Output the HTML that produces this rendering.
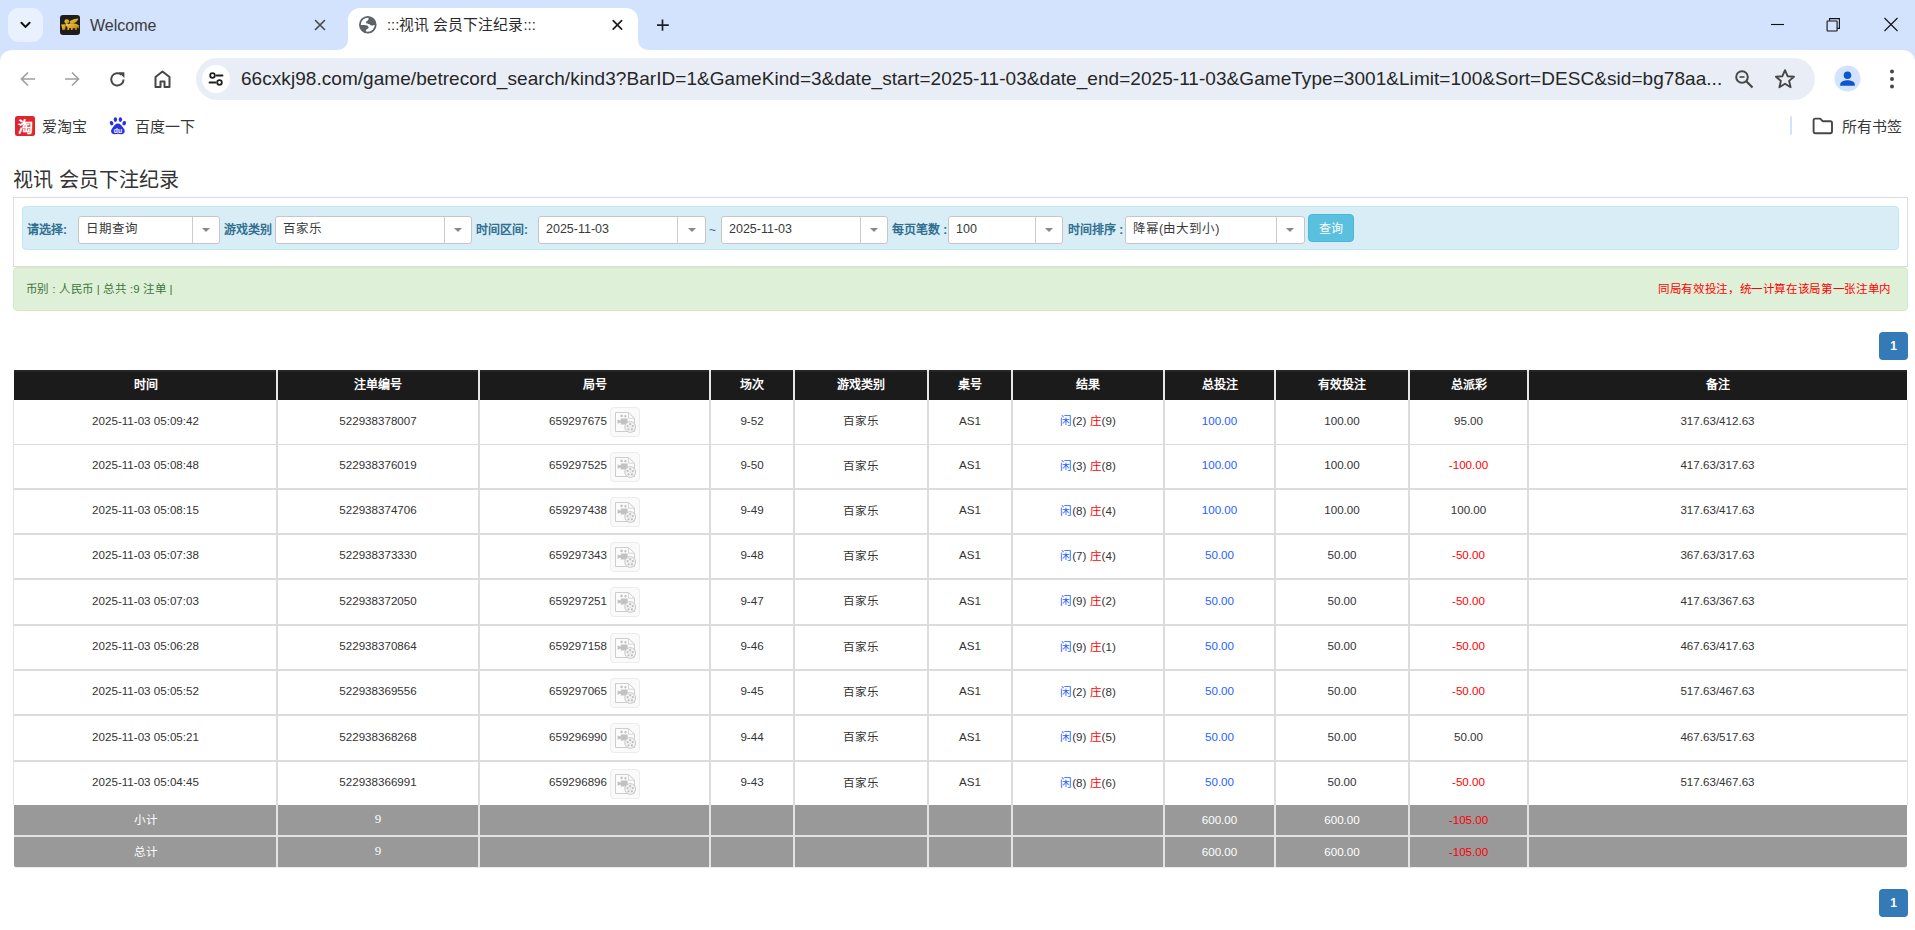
<!DOCTYPE html>
<html lang="zh-CN">
<head>
<meta charset="utf-8">
<title>视讯 会员下注纪录</title>
<style>
*{margin:0;padding:0;box-sizing:border-box}
html,body{width:1915px;height:930px;overflow:hidden;background:#fff;font-family:"Liberation Sans",sans-serif;color:#333}
.a{position:absolute}
/* chrome */
#tabstrip{left:0;top:0;width:1915px;height:62px;background:#d3e3fd}
#tabdd{left:8px;top:8px;width:35px;height:34px;border-radius:11px;background:#eaf1fe}
#acttab{left:348px;top:8px;width:290px;height:42px;background:#fff;border-radius:12px 12px 0 0}
.flare{width:10px;height:10px;top:40px;background:#fff}
.flare i{position:absolute;left:0;top:0;width:10px;height:10px;background:#d3e3fd}
#toolbar{left:0;top:50px;width:1915px;height:98px;background:#fff;border-radius:12px 12px 0 0}
#omni{left:196px;top:58px;width:1619px;height:42px;border-radius:21px;background:#e9eef6}
.tabtitle{font-size:15px;color:#1f1f1f;white-space:nowrap;line-height:20px}
.bm{font-size:15px;color:#383838;white-space:nowrap;line-height:18px}
svg{display:block}
/* page */
#title{left:13px;top:165px;font-size:20px;line-height:26px;color:#333;white-space:nowrap}
#panel{left:13px;top:197px;width:1895px;height:70px;border:1px solid #ddd;background:#fff}
#well{left:22px;top:206px;width:1877px;height:44px;border:1px solid #bce8f1;background:#d9edf7;border-radius:4px}
.lbl{font-size:12px;font-weight:bold;color:#31708f;white-space:nowrap;line-height:16px;top:222px}
.sel{top:216px;height:28px;background:#fff;border:1px solid #c6c6c6;border-radius:3px}
.sel .t{position:absolute;left:7px;top:4px;font-size:12.5px;line-height:16px;color:#3a3a3a;white-space:nowrap}
.sel .d{position:absolute;top:0;bottom:0;width:1px;background:#ccc}
.sel .c{position:absolute;top:10.5px;width:0;height:0;border-left:4px solid transparent;border-right:4px solid transparent;border-top:4px solid #888}
#qbtn{left:1308px;top:214px;width:46px;height:28px;background:#5bc0de;border:1px solid #46b8da;border-radius:4px;color:#fff;font-size:12px;line-height:28px;text-align:center}
#alert{left:13px;top:267px;width:1895px;height:44px;background:#dff0d8;border:1px solid #d6e9c6;border-radius:4px}
.th,.td,.tg{display:flex;align-items:center;justify-content:center;white-space:nowrap;font-size:11.6px}
.th>span,.td>span,.tg>span{position:relative;top:-2px}
.th{color:#fff;font-weight:bold;font-size:12px}
.td{color:#333}
.tg{color:#fff}
.tg>span{top:-1px}
.bl{color:#1f63ff}
.rd{color:#f00}
.jw{display:inline-flex;align-items:center}
.vb{position:relative;top:2px;display:inline-block;width:30px;height:30px;margin-left:3px;border:1px solid #ececec;border-radius:4px;background:#fafafa;padding:3px}
.pg{width:29px;height:28px;background:#337ab7;border-radius:4px;color:#fff;font-size:12px;font-weight:bold;text-align:center;line-height:28px}
</style>
</head>
<body>
<!-- ===== browser chrome ===== -->
<div class="a" id="tabstrip"></div>
<div class="a" id="tabdd"></div>
<svg class="a" style="left:19px;top:21px" width="13" height="8" viewBox="0 0 13 8"><path d="M2.4 1.8 L6.5 5.9 L10.6 1.8" fill="none" stroke="#111" stroke-width="2" stroke-linecap="round" stroke-linejoin="miter"/></svg>

<!-- inactive tab -->
<svg class="a" style="left:60px;top:15px" width="20" height="20" viewBox="0 0 20 20"><defs><linearGradient id="gd" x1="0" y1="0" x2="1" y2="1"><stop offset="0" stop-color="#f4c94a"/><stop offset=".6" stop-color="#d9a21e"/><stop offset="1" stop-color="#a8740e"/></linearGradient></defs><rect x="0" y="0" width="20" height="20" rx="3" fill="#1d1d1d"/><path d="M9.5 6.2 C12 4.4 15.5 3.6 18.6 3.4 C17.8 5.6 16.2 7.4 12.6 8.6 L10.4 8.8Z" fill="url(#gd)"/><circle cx="6.8" cy="6.6" r="2.4" fill="url(#gd)"/><path d="M1.2 9.4 L5.8 9.2 L5.2 14.8 L2.6 15 Z" fill="url(#gd)"/><ellipse cx="12.6" cy="10.9" rx="5.6" ry="2.6" fill="url(#gd)"/><path d="M7.4 11.5H9.2V15H7.4Z M11 12H12.6V15H11Z M15.2 11.8H16.8V15H15.2Z M17.6 9.6 L19 10.6 L18.6 13.6 L17.4 13Z M5.8 8.4 L8.6 9 L8.2 11.6 L5.6 11.2Z" fill="url(#gd)"/></svg>
<div class="a tabtitle" style="left:90px;top:16px;font-size:16px;color:#3a3a3a">Welcome</div>
<svg class="a" style="left:314px;top:19px" width="12" height="12" viewBox="0 0 12 12"><path d="M1.5 1.5L10.5 10.5M10.5 1.5L1.5 10.5" stroke="#474747" stroke-width="1.6" stroke-linecap="round"/></svg>

<!-- active tab -->
<div class="a" id="acttab"></div>
<div class="a flare" style="left:338px"><i style="border-radius:0 0 10px 0"></i></div>
<div class="a flare" style="left:638px"><i style="border-radius:0 0 0 10px"></i></div>
<svg class="a" style="left:359px;top:16px" width="18" height="18" viewBox="0 0 18 18"><circle cx="8.8" cy="8.8" r="7.9" fill="none" stroke="#5f6368" stroke-width="1.8"/><path d="M9.6 0.9 C9.7 3 9.4 4.2 8.5 4.7 C7.5 5.1 6.9 5.8 7.1 6.8 C7.4 7.7 8.4 7.9 9.5 7.9 C10.5 7.9 11.1 8.6 11.5 9.2 C12.5 9.9 14.4 9.7 16.7 8.8 A7.9 7.9 0 0 0 9.6 0.9Z M0.9 9 C3 8.8 5.4 8.9 7.2 9.3 C8.7 9.7 9.6 10.5 9.6 11.5 C9.6 12.6 8.2 12.8 7.4 13.4 C6.8 14 6.6 15.4 6.9 16.6 A7.9 7.9 0 0 1 0.9 9Z" fill="#5f6368"/></svg>
<div class="a tabtitle" style="left:387px;top:15px;font-size:14.8px;color:#2a2a2a">:::视讯 会员下注纪录:::</div>
<svg class="a" style="left:611px;top:19px" width="12" height="12" viewBox="0 0 12 12"><path d="M2.2 1.6L10.6 10.2M10.6 1.6L2.2 10.2" stroke="#1f1f1f" stroke-width="1.7" stroke-linecap="round"/></svg>
<svg class="a" style="left:655px;top:18px" width="15" height="15" viewBox="0 0 15 15"><path d="M7.5 1.4V12.8M2 7.1H13.8" stroke="#1f1f1f" stroke-width="1.7"/></svg>

<!-- window controls -->
<svg class="a" style="left:1770px;top:17px" width="16" height="14" viewBox="0 0 16 14"><path d="M1 7.5H14" stroke="#111" stroke-width="1.1"/></svg>
<svg class="a" style="left:1825px;top:16px" width="16" height="16" viewBox="0 0 16 16"><rect x="2.1" y="5" width="10" height="10" rx="0.6" fill="none" stroke="#111" stroke-width="1.1"/><path d="M4.6 4.8 V2.6 H14.4 V12.4 H12.2" fill="none" stroke="#111" stroke-width="1.1"/></svg>
<svg class="a" style="left:1883px;top:16px" width="16" height="16" viewBox="0 0 16 16"><path d="M1.5 2L14.5 15M14.5 2L1.5 15" stroke="#111" stroke-width="1.1"/></svg>

<!-- toolbar -->
<div class="a" id="toolbar"></div>
<svg class="a" style="left:19px;top:70px" width="18" height="18" viewBox="0 0 18 18"><path d="M16 9H3M9 2.5L2.5 9L9 15.5" fill="none" stroke="#a0a0a0" stroke-width="1.7" stroke-linejoin="miter"/></svg>
<svg class="a" style="left:63px;top:70px" width="18" height="18" viewBox="0 0 18 18"><path d="M2 9H15M9 2.5L15.5 9L9 15.5" fill="none" stroke="#a0a0a0" stroke-width="1.7"/></svg>
<svg class="a" style="left:108px;top:70px" width="19" height="19" viewBox="0 0 19 19"><path d="M15.6 9.5 A6.2 6.2 0 1 1 13.6 4.8" fill="none" stroke="#474747" stroke-width="2"/><path d="M10.6 2.2 H16.4 V8 Z" fill="#474747"/></svg>
<svg class="a" style="left:153px;top:69px" width="19" height="20" viewBox="0 0 19 20"><path d="M2.5 18V8L9.5 2.5L16.5 8V18H11.5V12.5H7.5V18Z" fill="none" stroke="#474747" stroke-width="2" stroke-linejoin="round"/></svg>
<div class="a" id="omni"></div>
<svg class="a" style="left:202px;top:65px" width="28" height="28" viewBox="0 0 28 28"><circle cx="14" cy="14" r="14" fill="#fff"/><circle cx="10.5" cy="10.5" r="2.3" fill="none" stroke="#1f1f1f" stroke-width="1.8"/><path d="M14.5 10.5H20.5" stroke="#1f1f1f" stroke-width="1.8" stroke-linecap="round"/><circle cx="17.5" cy="17.5" r="2.3" fill="none" stroke="#1f1f1f" stroke-width="1.8"/><path d="M7.5 17.5H13.5" stroke="#1f1f1f" stroke-width="1.8" stroke-linecap="round"/></svg>
<div class="a" id="url" style="left:241px;top:68px;font-size:19px;line-height:22px;color:#262626;letter-spacing:0.05px;white-space:nowrap">66cxkj98.com/game/betrecord_search/kind3?BarID=1&amp;GameKind=3&amp;date_start=2025-11-03&amp;date_end=2025-11-03&amp;GameType=3001&amp;Limit=100&amp;Sort=DESC&amp;sid=bg78aa...</div>
<svg class="a" style="left:1734px;top:69px" width="21" height="21" viewBox="0 0 21 21"><circle cx="8" cy="8" r="5.8" fill="none" stroke="#474747" stroke-width="2"/><path d="M12.3 12.3L18.5 18.5" stroke="#474747" stroke-width="2.2"/><path d="M5.5 8H10.5" stroke="#474747" stroke-width="1.6"/></svg>
<svg class="a" style="left:1774px;top:68px" width="22" height="22" viewBox="0 0 22 22"><path d="M11 2.2L13.6 8.2L20 8.7L15.1 12.9L16.6 19.2L11 15.8L5.4 19.2L6.9 12.9L2 8.7L8.4 8.2Z" fill="none" stroke="#474747" stroke-width="1.9" stroke-linejoin="round"/></svg>
<svg class="a" style="left:1834px;top:65px" width="27" height="27" viewBox="0 0 27 27"><circle cx="13.5" cy="13.5" r="13" fill="#d3e3fd"/><circle cx="13.5" cy="10.2" r="3.8" fill="#0b57d0"/><path d="M6.2 19.6 C6.2 16.2 10.5 15.2 13.5 15.2 C16.5 15.2 20.8 16.2 20.8 19.6 V20.8 H6.2Z" fill="#0b57d0"/></svg>
<svg class="a" style="left:1888px;top:68px" width="8" height="22" viewBox="0 0 8 22"><circle cx="4" cy="3.5" r="2" fill="#474747"/><circle cx="4" cy="11" r="2" fill="#474747"/><circle cx="4" cy="18.5" r="2" fill="#474747"/></svg>

<!-- bookmarks bar -->
<svg class="a" style="left:15px;top:116px" width="20" height="20" viewBox="0 0 20 20"><rect width="20" height="20" rx="2.5" fill="#e0262d"/><text x="10" y="16" font-size="15" font-weight="bold" fill="#fff" text-anchor="middle" font-family="Liberation Sans">淘</text></svg>
<div class="a bm" style="left:42px;top:118px">爱淘宝</div>
<svg class="a" style="left:109px;top:117px" width="18" height="18" viewBox="0 0 18 18"><ellipse cx="2.6" cy="6.2" rx="1.8" ry="2.3" transform="rotate(-20 2.6 6.2)" fill="#2932e1"/><ellipse cx="6.4" cy="2.6" rx="1.7" ry="2.3" fill="#2932e1"/><ellipse cx="11.4" cy="2.6" rx="1.7" ry="2.3" fill="#2932e1"/><ellipse cx="15.2" cy="6.2" rx="1.8" ry="2.3" transform="rotate(20 15.2 6.2)" fill="#2932e1"/><path d="M8.9 6.6 C11.2 6.6 12.6 8.6 14 10.4 C15.4 12 16 13.4 15.6 15 C15.1 16.8 13.4 17.4 11.8 17.2 C10.6 17.1 9.8 16.8 8.9 16.8 C8 16.8 7.2 17.1 6 17.2 C4.4 17.4 2.7 16.8 2.2 15 C1.8 13.4 2.4 12 3.8 10.4 C5.2 8.6 6.6 6.6 8.9 6.6Z" fill="#2932e1"/><text x="8.9" y="15.6" font-size="6.8" font-weight="bold" fill="#fff" text-anchor="middle" font-family="Liberation Sans">du</text></svg>
<div class="a bm" style="left:135px;top:118px">百度一下</div>
<div class="a" style="left:1790px;top:116px;width:2px;height:19px;background:#d3e3fd;border-radius:1px"></div>
<svg class="a" style="left:1811px;top:117px" width="23" height="18" viewBox="0 0 23 18"><path d="M2.6 3.2 C2.6 2.2 3.2 1.6 4.2 1.6 H9.2 L11.6 4.2 H19.4 C20.4 4.2 21 4.8 21 5.8 V14.6 C21 15.6 20.4 16.2 19.4 16.2 H4.2 C3.2 16.2 2.6 15.6 2.6 14.6 Z" fill="none" stroke="#474747" stroke-width="1.9" stroke-linejoin="round"/></svg>
<div class="a bm" style="left:1842px;top:118px">所有书签</div>

<!-- ===== page ===== -->
<div class="a" id="title" style="top:167px">视讯 会员下注纪录</div>
<div class="a" id="panel"></div>
<div class="a" id="well"></div>

<div class="a lbl" style="left:27px">请选择:</div>
<div class="a sel" style="left:78px;width:142px"><span class="t">日期查询</span><i class="d" style="left:113px"></i><i class="c" style="left:123px"></i></div>
<div class="a lbl" style="left:224px">游戏类别</div>
<div class="a sel" style="left:275px;width:197px"><span class="t">百家乐</span><i class="d" style="left:168px"></i><i class="c" style="left:178px"></i></div>
<div class="a lbl" style="left:476px">时间区间:</div>
<div class="a sel" style="left:538px;width:168px"><span class="t">2025-11-03</span><i class="d" style="left:138px"></i><i class="c" style="left:149px"></i></div>
<div class="a" style="left:709px;top:222px;font-size:12px;line-height:16px;color:#31708f">~</div>
<div class="a sel" style="left:721px;width:167px"><span class="t">2025-11-03</span><i class="d" style="left:138px"></i><i class="c" style="left:148px"></i></div>
<div class="a lbl" style="left:892px">每页笔数 :</div>
<div class="a sel" style="left:948px;width:115px"><span class="t">100</span><i class="d" style="left:86px"></i><i class="c" style="left:96px"></i></div>
<div class="a lbl" style="left:1068px">时间排序 :</div>
<div class="a sel" style="left:1125px;width:180px"><span class="t">降幂(由大到小)</span><i class="d" style="left:150px"></i><i class="c" style="left:160px"></i></div>
<div class="a" id="qbtn">查询</div>

<div class="a" id="alert"></div>
<div class="a" style="left:26px;top:281px;font-size:11.5px;letter-spacing:0.32px;line-height:16px;color:#3c763d;white-space:nowrap">币别 : 人民币 | 总共 :9 注单 |</div>
<div class="a" style="right:24px;top:281px;font-size:11.5px;letter-spacing:0.65px;line-height:16px;color:#f00;white-space:nowrap">同局有效投注，统一计算在该局第一张注单内</div>

<div class="a pg" style="left:1879px;top:332px">1</div>

<!--TABLE-->
<div class="a" style="left:14px;top:370px;width:1893px;height:30px;background:#1b1b1b"></div>
<div class="a" style="left:14px;top:370px;width:1893px;height:2px;background:#262626"></div>
<div class="a" style="left:13px;top:400px;width:1px;height:405px;background:#e3e3e3"></div>
<div class="a" style="left:1907px;top:400px;width:1px;height:405px;background:#e3e3e3"></div>
<div class="a" style="left:14px;top:805px;width:1893px;height:62px;background:#999;border-radius:0 0 2px 2px;box-shadow:0 1px 1px rgba(0,0,0,.08)"></div>
<div class="a" style="left:14px;top:444px;width:1893px;height:1px;background:#dcdcdc"></div>
<div class="a" style="left:14px;top:488px;width:1893px;height:2px;background:#dcdcdc"></div>
<div class="a" style="left:14px;top:533px;width:1893px;height:2px;background:#dcdcdc"></div>
<div class="a" style="left:14px;top:578px;width:1893px;height:2px;background:#dcdcdc"></div>
<div class="a" style="left:14px;top:624px;width:1893px;height:2px;background:#dcdcdc"></div>
<div class="a" style="left:14px;top:669px;width:1893px;height:2px;background:#dcdcdc"></div>
<div class="a" style="left:14px;top:714px;width:1893px;height:2px;background:#dcdcdc"></div>
<div class="a" style="left:14px;top:760px;width:1893px;height:2px;background:#dcdcdc"></div>
<div class="a" style="left:14px;top:835px;width:1893px;height:2px;background:#e3e3e3"></div>
<div class="a" style="left:276px;top:370px;width:2px;height:30px;background:#e6e6e6"></div>
<div class="a" style="left:276px;top:400px;width:2px;height:405px;background:#dcdcdc"></div>
<div class="a" style="left:276px;top:805px;width:2px;height:62px;background:#e3e3e3"></div>
<div class="a" style="left:478px;top:370px;width:2px;height:30px;background:#e6e6e6"></div>
<div class="a" style="left:478px;top:400px;width:2px;height:405px;background:#dcdcdc"></div>
<div class="a" style="left:478px;top:805px;width:2px;height:62px;background:#e3e3e3"></div>
<div class="a" style="left:709px;top:370px;width:2px;height:30px;background:#e6e6e6"></div>
<div class="a" style="left:709px;top:400px;width:2px;height:405px;background:#dcdcdc"></div>
<div class="a" style="left:709px;top:805px;width:2px;height:62px;background:#e3e3e3"></div>
<div class="a" style="left:793px;top:370px;width:2px;height:30px;background:#e6e6e6"></div>
<div class="a" style="left:793px;top:400px;width:2px;height:405px;background:#dcdcdc"></div>
<div class="a" style="left:793px;top:805px;width:2px;height:62px;background:#e3e3e3"></div>
<div class="a" style="left:927px;top:370px;width:2px;height:30px;background:#e6e6e6"></div>
<div class="a" style="left:927px;top:400px;width:2px;height:405px;background:#dcdcdc"></div>
<div class="a" style="left:927px;top:805px;width:2px;height:62px;background:#e3e3e3"></div>
<div class="a" style="left:1011px;top:370px;width:2px;height:30px;background:#e6e6e6"></div>
<div class="a" style="left:1011px;top:400px;width:2px;height:405px;background:#dcdcdc"></div>
<div class="a" style="left:1011px;top:805px;width:2px;height:62px;background:#e3e3e3"></div>
<div class="a" style="left:1163px;top:370px;width:2px;height:30px;background:#e6e6e6"></div>
<div class="a" style="left:1163px;top:400px;width:2px;height:405px;background:#dcdcdc"></div>
<div class="a" style="left:1163px;top:805px;width:2px;height:62px;background:#e3e3e3"></div>
<div class="a" style="left:1274px;top:370px;width:2px;height:30px;background:#e6e6e6"></div>
<div class="a" style="left:1274px;top:400px;width:2px;height:405px;background:#dcdcdc"></div>
<div class="a" style="left:1274px;top:805px;width:2px;height:62px;background:#e3e3e3"></div>
<div class="a" style="left:1408px;top:370px;width:2px;height:30px;background:#e6e6e6"></div>
<div class="a" style="left:1408px;top:400px;width:2px;height:405px;background:#dcdcdc"></div>
<div class="a" style="left:1408px;top:805px;width:2px;height:62px;background:#e3e3e3"></div>
<div class="a" style="left:1527px;top:370px;width:2px;height:30px;background:#e6e6e6"></div>
<div class="a" style="left:1527px;top:400px;width:2px;height:405px;background:#dcdcdc"></div>
<div class="a" style="left:1527px;top:805px;width:2px;height:62px;background:#e3e3e3"></div>
<div class="a th" style="left:15px;top:370px;width:261px;height:30px"><span>时间</span></div>
<div class="a th" style="left:278px;top:370px;width:200px;height:30px"><span>注单编号</span></div>
<div class="a th" style="left:480px;top:370px;width:229px;height:30px"><span>局号</span></div>
<div class="a th" style="left:711px;top:370px;width:82px;height:30px"><span>场次</span></div>
<div class="a th" style="left:795px;top:370px;width:132px;height:30px"><span>游戏类别</span></div>
<div class="a th" style="left:929px;top:370px;width:82px;height:30px"><span>桌号</span></div>
<div class="a th" style="left:1013px;top:370px;width:150px;height:30px"><span>结果</span></div>
<div class="a th" style="left:1165px;top:370px;width:109px;height:30px"><span>总投注</span></div>
<div class="a th" style="left:1276px;top:370px;width:132px;height:30px"><span>有效投注</span></div>
<div class="a th" style="left:1410px;top:370px;width:117px;height:30px"><span>总派彩</span></div>
<div class="a th" style="left:1529px;top:370px;width:377px;height:30px"><span>备注</span></div>
<div class="a td" style="left:15px;top:400px;width:261px;height:44px"><span>2025-11-03 05:09:42</span></div>
<div class="a td" style="left:278px;top:400px;width:200px;height:44px"><span>522938378007</span></div>
<div class="a td" style="left:480px;top:400px;width:229px;height:44px"><span><span class="jw"><span class="jn">659297675</span><span class="vb"><svg width="22" height="22" viewBox="0 0 22 22"><path d="M1.5 1.5H14.5L20.5 7.2V20.5H1.5Z" fill="#fbfbfb" stroke="#cdcdcd" stroke-width="1"/><path d="M14.5 1.5V7.2H20.5" fill="none" stroke="#d6d6d6" stroke-width="1"/><path d="M6.8 7.6H13.6V13.4H6.8Z M3.6 8.4L6.8 9.6V11.6L3.6 12.8Z M7.6 6.2A1.3 1.3 0 1 1 7.61 6.2Z M11.4 6.4A1.2 1.2 0 1 1 11.41 6.4Z" fill="#c2c2c2"/><circle cx="16.2" cy="16" r="5.4" fill="#f2f2f2" stroke="#c9c9c9" stroke-width="1"/><circle cx="16.2" cy="13.2" r="1.1" fill="#c0c0c0"/><circle cx="13.6" cy="15.1" r="1.1" fill="#c0c0c0"/><circle cx="18.8" cy="15.1" r="1.1" fill="#c0c0c0"/><circle cx="14.5" cy="18.3" r="1.1" fill="#c0c0c0"/><circle cx="17.9" cy="18.3" r="1.1" fill="#c0c0c0"/><circle cx="16.2" cy="16.2" r=".5" fill="#c8c8c8"/></svg></span></span></span></div>
<div class="a td" style="left:711px;top:400px;width:82px;height:44px"><span>9-52</span></div>
<div class="a td" style="left:795px;top:400px;width:132px;height:44px"><span>百家乐</span></div>
<div class="a td" style="left:929px;top:400px;width:82px;height:44px"><span>AS1</span></div>
<div class="a td" style="left:1013px;top:400px;width:150px;height:44px"><span><span class="bl">闲</span>(2) <span class="rd">庄</span>(9)</span></div>
<div class="a td" style="left:1165px;top:400px;width:109px;height:44px"><span><span class="bl">100.00</span></span></div>
<div class="a td" style="left:1276px;top:400px;width:132px;height:44px"><span>100.00</span></div>
<div class="a td" style="left:1410px;top:400px;width:117px;height:44px"><span><span class="">95.00</span></span></div>
<div class="a td" style="left:1529px;top:400px;width:377px;height:44px"><span>317.63/412.63</span></div>
<div class="a td" style="left:15px;top:445px;width:261px;height:43px"><span>2025-11-03 05:08:48</span></div>
<div class="a td" style="left:278px;top:445px;width:200px;height:43px"><span>522938376019</span></div>
<div class="a td" style="left:480px;top:445px;width:229px;height:43px"><span><span class="jw"><span class="jn">659297525</span><span class="vb"><svg width="22" height="22" viewBox="0 0 22 22"><path d="M1.5 1.5H14.5L20.5 7.2V20.5H1.5Z" fill="#fbfbfb" stroke="#cdcdcd" stroke-width="1"/><path d="M14.5 1.5V7.2H20.5" fill="none" stroke="#d6d6d6" stroke-width="1"/><path d="M6.8 7.6H13.6V13.4H6.8Z M3.6 8.4L6.8 9.6V11.6L3.6 12.8Z M7.6 6.2A1.3 1.3 0 1 1 7.61 6.2Z M11.4 6.4A1.2 1.2 0 1 1 11.41 6.4Z" fill="#c2c2c2"/><circle cx="16.2" cy="16" r="5.4" fill="#f2f2f2" stroke="#c9c9c9" stroke-width="1"/><circle cx="16.2" cy="13.2" r="1.1" fill="#c0c0c0"/><circle cx="13.6" cy="15.1" r="1.1" fill="#c0c0c0"/><circle cx="18.8" cy="15.1" r="1.1" fill="#c0c0c0"/><circle cx="14.5" cy="18.3" r="1.1" fill="#c0c0c0"/><circle cx="17.9" cy="18.3" r="1.1" fill="#c0c0c0"/><circle cx="16.2" cy="16.2" r=".5" fill="#c8c8c8"/></svg></span></span></span></div>
<div class="a td" style="left:711px;top:445px;width:82px;height:43px"><span>9-50</span></div>
<div class="a td" style="left:795px;top:445px;width:132px;height:43px"><span>百家乐</span></div>
<div class="a td" style="left:929px;top:445px;width:82px;height:43px"><span>AS1</span></div>
<div class="a td" style="left:1013px;top:445px;width:150px;height:43px"><span><span class="bl">闲</span>(3) <span class="rd">庄</span>(8)</span></div>
<div class="a td" style="left:1165px;top:445px;width:109px;height:43px"><span><span class="bl">100.00</span></span></div>
<div class="a td" style="left:1276px;top:445px;width:132px;height:43px"><span>100.00</span></div>
<div class="a td" style="left:1410px;top:445px;width:117px;height:43px"><span><span class="rd">-100.00</span></span></div>
<div class="a td" style="left:1529px;top:445px;width:377px;height:43px"><span>417.63/317.63</span></div>
<div class="a td" style="left:15px;top:490px;width:261px;height:43px"><span>2025-11-03 05:08:15</span></div>
<div class="a td" style="left:278px;top:490px;width:200px;height:43px"><span>522938374706</span></div>
<div class="a td" style="left:480px;top:490px;width:229px;height:43px"><span><span class="jw"><span class="jn">659297438</span><span class="vb"><svg width="22" height="22" viewBox="0 0 22 22"><path d="M1.5 1.5H14.5L20.5 7.2V20.5H1.5Z" fill="#fbfbfb" stroke="#cdcdcd" stroke-width="1"/><path d="M14.5 1.5V7.2H20.5" fill="none" stroke="#d6d6d6" stroke-width="1"/><path d="M6.8 7.6H13.6V13.4H6.8Z M3.6 8.4L6.8 9.6V11.6L3.6 12.8Z M7.6 6.2A1.3 1.3 0 1 1 7.61 6.2Z M11.4 6.4A1.2 1.2 0 1 1 11.41 6.4Z" fill="#c2c2c2"/><circle cx="16.2" cy="16" r="5.4" fill="#f2f2f2" stroke="#c9c9c9" stroke-width="1"/><circle cx="16.2" cy="13.2" r="1.1" fill="#c0c0c0"/><circle cx="13.6" cy="15.1" r="1.1" fill="#c0c0c0"/><circle cx="18.8" cy="15.1" r="1.1" fill="#c0c0c0"/><circle cx="14.5" cy="18.3" r="1.1" fill="#c0c0c0"/><circle cx="17.9" cy="18.3" r="1.1" fill="#c0c0c0"/><circle cx="16.2" cy="16.2" r=".5" fill="#c8c8c8"/></svg></span></span></span></div>
<div class="a td" style="left:711px;top:490px;width:82px;height:43px"><span>9-49</span></div>
<div class="a td" style="left:795px;top:490px;width:132px;height:43px"><span>百家乐</span></div>
<div class="a td" style="left:929px;top:490px;width:82px;height:43px"><span>AS1</span></div>
<div class="a td" style="left:1013px;top:490px;width:150px;height:43px"><span><span class="bl">闲</span>(8) <span class="rd">庄</span>(4)</span></div>
<div class="a td" style="left:1165px;top:490px;width:109px;height:43px"><span><span class="bl">100.00</span></span></div>
<div class="a td" style="left:1276px;top:490px;width:132px;height:43px"><span>100.00</span></div>
<div class="a td" style="left:1410px;top:490px;width:117px;height:43px"><span><span class="">100.00</span></span></div>
<div class="a td" style="left:1529px;top:490px;width:377px;height:43px"><span>317.63/417.63</span></div>
<div class="a td" style="left:15px;top:535px;width:261px;height:43px"><span>2025-11-03 05:07:38</span></div>
<div class="a td" style="left:278px;top:535px;width:200px;height:43px"><span>522938373330</span></div>
<div class="a td" style="left:480px;top:535px;width:229px;height:43px"><span><span class="jw"><span class="jn">659297343</span><span class="vb"><svg width="22" height="22" viewBox="0 0 22 22"><path d="M1.5 1.5H14.5L20.5 7.2V20.5H1.5Z" fill="#fbfbfb" stroke="#cdcdcd" stroke-width="1"/><path d="M14.5 1.5V7.2H20.5" fill="none" stroke="#d6d6d6" stroke-width="1"/><path d="M6.8 7.6H13.6V13.4H6.8Z M3.6 8.4L6.8 9.6V11.6L3.6 12.8Z M7.6 6.2A1.3 1.3 0 1 1 7.61 6.2Z M11.4 6.4A1.2 1.2 0 1 1 11.41 6.4Z" fill="#c2c2c2"/><circle cx="16.2" cy="16" r="5.4" fill="#f2f2f2" stroke="#c9c9c9" stroke-width="1"/><circle cx="16.2" cy="13.2" r="1.1" fill="#c0c0c0"/><circle cx="13.6" cy="15.1" r="1.1" fill="#c0c0c0"/><circle cx="18.8" cy="15.1" r="1.1" fill="#c0c0c0"/><circle cx="14.5" cy="18.3" r="1.1" fill="#c0c0c0"/><circle cx="17.9" cy="18.3" r="1.1" fill="#c0c0c0"/><circle cx="16.2" cy="16.2" r=".5" fill="#c8c8c8"/></svg></span></span></span></div>
<div class="a td" style="left:711px;top:535px;width:82px;height:43px"><span>9-48</span></div>
<div class="a td" style="left:795px;top:535px;width:132px;height:43px"><span>百家乐</span></div>
<div class="a td" style="left:929px;top:535px;width:82px;height:43px"><span>AS1</span></div>
<div class="a td" style="left:1013px;top:535px;width:150px;height:43px"><span><span class="bl">闲</span>(7) <span class="rd">庄</span>(4)</span></div>
<div class="a td" style="left:1165px;top:535px;width:109px;height:43px"><span><span class="bl">50.00</span></span></div>
<div class="a td" style="left:1276px;top:535px;width:132px;height:43px"><span>50.00</span></div>
<div class="a td" style="left:1410px;top:535px;width:117px;height:43px"><span><span class="rd">-50.00</span></span></div>
<div class="a td" style="left:1529px;top:535px;width:377px;height:43px"><span>367.63/317.63</span></div>
<div class="a td" style="left:15px;top:580px;width:261px;height:44px"><span>2025-11-03 05:07:03</span></div>
<div class="a td" style="left:278px;top:580px;width:200px;height:44px"><span>522938372050</span></div>
<div class="a td" style="left:480px;top:580px;width:229px;height:44px"><span><span class="jw"><span class="jn">659297251</span><span class="vb"><svg width="22" height="22" viewBox="0 0 22 22"><path d="M1.5 1.5H14.5L20.5 7.2V20.5H1.5Z" fill="#fbfbfb" stroke="#cdcdcd" stroke-width="1"/><path d="M14.5 1.5V7.2H20.5" fill="none" stroke="#d6d6d6" stroke-width="1"/><path d="M6.8 7.6H13.6V13.4H6.8Z M3.6 8.4L6.8 9.6V11.6L3.6 12.8Z M7.6 6.2A1.3 1.3 0 1 1 7.61 6.2Z M11.4 6.4A1.2 1.2 0 1 1 11.41 6.4Z" fill="#c2c2c2"/><circle cx="16.2" cy="16" r="5.4" fill="#f2f2f2" stroke="#c9c9c9" stroke-width="1"/><circle cx="16.2" cy="13.2" r="1.1" fill="#c0c0c0"/><circle cx="13.6" cy="15.1" r="1.1" fill="#c0c0c0"/><circle cx="18.8" cy="15.1" r="1.1" fill="#c0c0c0"/><circle cx="14.5" cy="18.3" r="1.1" fill="#c0c0c0"/><circle cx="17.9" cy="18.3" r="1.1" fill="#c0c0c0"/><circle cx="16.2" cy="16.2" r=".5" fill="#c8c8c8"/></svg></span></span></span></div>
<div class="a td" style="left:711px;top:580px;width:82px;height:44px"><span>9-47</span></div>
<div class="a td" style="left:795px;top:580px;width:132px;height:44px"><span>百家乐</span></div>
<div class="a td" style="left:929px;top:580px;width:82px;height:44px"><span>AS1</span></div>
<div class="a td" style="left:1013px;top:580px;width:150px;height:44px"><span><span class="bl">闲</span>(9) <span class="rd">庄</span>(2)</span></div>
<div class="a td" style="left:1165px;top:580px;width:109px;height:44px"><span><span class="bl">50.00</span></span></div>
<div class="a td" style="left:1276px;top:580px;width:132px;height:44px"><span>50.00</span></div>
<div class="a td" style="left:1410px;top:580px;width:117px;height:44px"><span><span class="rd">-50.00</span></span></div>
<div class="a td" style="left:1529px;top:580px;width:377px;height:44px"><span>417.63/367.63</span></div>
<div class="a td" style="left:15px;top:626px;width:261px;height:43px"><span>2025-11-03 05:06:28</span></div>
<div class="a td" style="left:278px;top:626px;width:200px;height:43px"><span>522938370864</span></div>
<div class="a td" style="left:480px;top:626px;width:229px;height:43px"><span><span class="jw"><span class="jn">659297158</span><span class="vb"><svg width="22" height="22" viewBox="0 0 22 22"><path d="M1.5 1.5H14.5L20.5 7.2V20.5H1.5Z" fill="#fbfbfb" stroke="#cdcdcd" stroke-width="1"/><path d="M14.5 1.5V7.2H20.5" fill="none" stroke="#d6d6d6" stroke-width="1"/><path d="M6.8 7.6H13.6V13.4H6.8Z M3.6 8.4L6.8 9.6V11.6L3.6 12.8Z M7.6 6.2A1.3 1.3 0 1 1 7.61 6.2Z M11.4 6.4A1.2 1.2 0 1 1 11.41 6.4Z" fill="#c2c2c2"/><circle cx="16.2" cy="16" r="5.4" fill="#f2f2f2" stroke="#c9c9c9" stroke-width="1"/><circle cx="16.2" cy="13.2" r="1.1" fill="#c0c0c0"/><circle cx="13.6" cy="15.1" r="1.1" fill="#c0c0c0"/><circle cx="18.8" cy="15.1" r="1.1" fill="#c0c0c0"/><circle cx="14.5" cy="18.3" r="1.1" fill="#c0c0c0"/><circle cx="17.9" cy="18.3" r="1.1" fill="#c0c0c0"/><circle cx="16.2" cy="16.2" r=".5" fill="#c8c8c8"/></svg></span></span></span></div>
<div class="a td" style="left:711px;top:626px;width:82px;height:43px"><span>9-46</span></div>
<div class="a td" style="left:795px;top:626px;width:132px;height:43px"><span>百家乐</span></div>
<div class="a td" style="left:929px;top:626px;width:82px;height:43px"><span>AS1</span></div>
<div class="a td" style="left:1013px;top:626px;width:150px;height:43px"><span><span class="bl">闲</span>(9) <span class="rd">庄</span>(1)</span></div>
<div class="a td" style="left:1165px;top:626px;width:109px;height:43px"><span><span class="bl">50.00</span></span></div>
<div class="a td" style="left:1276px;top:626px;width:132px;height:43px"><span>50.00</span></div>
<div class="a td" style="left:1410px;top:626px;width:117px;height:43px"><span><span class="rd">-50.00</span></span></div>
<div class="a td" style="left:1529px;top:626px;width:377px;height:43px"><span>467.63/417.63</span></div>
<div class="a td" style="left:15px;top:671px;width:261px;height:43px"><span>2025-11-03 05:05:52</span></div>
<div class="a td" style="left:278px;top:671px;width:200px;height:43px"><span>522938369556</span></div>
<div class="a td" style="left:480px;top:671px;width:229px;height:43px"><span><span class="jw"><span class="jn">659297065</span><span class="vb"><svg width="22" height="22" viewBox="0 0 22 22"><path d="M1.5 1.5H14.5L20.5 7.2V20.5H1.5Z" fill="#fbfbfb" stroke="#cdcdcd" stroke-width="1"/><path d="M14.5 1.5V7.2H20.5" fill="none" stroke="#d6d6d6" stroke-width="1"/><path d="M6.8 7.6H13.6V13.4H6.8Z M3.6 8.4L6.8 9.6V11.6L3.6 12.8Z M7.6 6.2A1.3 1.3 0 1 1 7.61 6.2Z M11.4 6.4A1.2 1.2 0 1 1 11.41 6.4Z" fill="#c2c2c2"/><circle cx="16.2" cy="16" r="5.4" fill="#f2f2f2" stroke="#c9c9c9" stroke-width="1"/><circle cx="16.2" cy="13.2" r="1.1" fill="#c0c0c0"/><circle cx="13.6" cy="15.1" r="1.1" fill="#c0c0c0"/><circle cx="18.8" cy="15.1" r="1.1" fill="#c0c0c0"/><circle cx="14.5" cy="18.3" r="1.1" fill="#c0c0c0"/><circle cx="17.9" cy="18.3" r="1.1" fill="#c0c0c0"/><circle cx="16.2" cy="16.2" r=".5" fill="#c8c8c8"/></svg></span></span></span></div>
<div class="a td" style="left:711px;top:671px;width:82px;height:43px"><span>9-45</span></div>
<div class="a td" style="left:795px;top:671px;width:132px;height:43px"><span>百家乐</span></div>
<div class="a td" style="left:929px;top:671px;width:82px;height:43px"><span>AS1</span></div>
<div class="a td" style="left:1013px;top:671px;width:150px;height:43px"><span><span class="bl">闲</span>(2) <span class="rd">庄</span>(8)</span></div>
<div class="a td" style="left:1165px;top:671px;width:109px;height:43px"><span><span class="bl">50.00</span></span></div>
<div class="a td" style="left:1276px;top:671px;width:132px;height:43px"><span>50.00</span></div>
<div class="a td" style="left:1410px;top:671px;width:117px;height:43px"><span><span class="rd">-50.00</span></span></div>
<div class="a td" style="left:1529px;top:671px;width:377px;height:43px"><span>517.63/467.63</span></div>
<div class="a td" style="left:15px;top:716px;width:261px;height:44px"><span>2025-11-03 05:05:21</span></div>
<div class="a td" style="left:278px;top:716px;width:200px;height:44px"><span>522938368268</span></div>
<div class="a td" style="left:480px;top:716px;width:229px;height:44px"><span><span class="jw"><span class="jn">659296990</span><span class="vb"><svg width="22" height="22" viewBox="0 0 22 22"><path d="M1.5 1.5H14.5L20.5 7.2V20.5H1.5Z" fill="#fbfbfb" stroke="#cdcdcd" stroke-width="1"/><path d="M14.5 1.5V7.2H20.5" fill="none" stroke="#d6d6d6" stroke-width="1"/><path d="M6.8 7.6H13.6V13.4H6.8Z M3.6 8.4L6.8 9.6V11.6L3.6 12.8Z M7.6 6.2A1.3 1.3 0 1 1 7.61 6.2Z M11.4 6.4A1.2 1.2 0 1 1 11.41 6.4Z" fill="#c2c2c2"/><circle cx="16.2" cy="16" r="5.4" fill="#f2f2f2" stroke="#c9c9c9" stroke-width="1"/><circle cx="16.2" cy="13.2" r="1.1" fill="#c0c0c0"/><circle cx="13.6" cy="15.1" r="1.1" fill="#c0c0c0"/><circle cx="18.8" cy="15.1" r="1.1" fill="#c0c0c0"/><circle cx="14.5" cy="18.3" r="1.1" fill="#c0c0c0"/><circle cx="17.9" cy="18.3" r="1.1" fill="#c0c0c0"/><circle cx="16.2" cy="16.2" r=".5" fill="#c8c8c8"/></svg></span></span></span></div>
<div class="a td" style="left:711px;top:716px;width:82px;height:44px"><span>9-44</span></div>
<div class="a td" style="left:795px;top:716px;width:132px;height:44px"><span>百家乐</span></div>
<div class="a td" style="left:929px;top:716px;width:82px;height:44px"><span>AS1</span></div>
<div class="a td" style="left:1013px;top:716px;width:150px;height:44px"><span><span class="bl">闲</span>(9) <span class="rd">庄</span>(5)</span></div>
<div class="a td" style="left:1165px;top:716px;width:109px;height:44px"><span><span class="bl">50.00</span></span></div>
<div class="a td" style="left:1276px;top:716px;width:132px;height:44px"><span>50.00</span></div>
<div class="a td" style="left:1410px;top:716px;width:117px;height:44px"><span><span class="">50.00</span></span></div>
<div class="a td" style="left:1529px;top:716px;width:377px;height:44px"><span>467.63/517.63</span></div>
<div class="a td" style="left:15px;top:762px;width:261px;height:43px"><span>2025-11-03 05:04:45</span></div>
<div class="a td" style="left:278px;top:762px;width:200px;height:43px"><span>522938366991</span></div>
<div class="a td" style="left:480px;top:762px;width:229px;height:43px"><span><span class="jw"><span class="jn">659296896</span><span class="vb"><svg width="22" height="22" viewBox="0 0 22 22"><path d="M1.5 1.5H14.5L20.5 7.2V20.5H1.5Z" fill="#fbfbfb" stroke="#cdcdcd" stroke-width="1"/><path d="M14.5 1.5V7.2H20.5" fill="none" stroke="#d6d6d6" stroke-width="1"/><path d="M6.8 7.6H13.6V13.4H6.8Z M3.6 8.4L6.8 9.6V11.6L3.6 12.8Z M7.6 6.2A1.3 1.3 0 1 1 7.61 6.2Z M11.4 6.4A1.2 1.2 0 1 1 11.41 6.4Z" fill="#c2c2c2"/><circle cx="16.2" cy="16" r="5.4" fill="#f2f2f2" stroke="#c9c9c9" stroke-width="1"/><circle cx="16.2" cy="13.2" r="1.1" fill="#c0c0c0"/><circle cx="13.6" cy="15.1" r="1.1" fill="#c0c0c0"/><circle cx="18.8" cy="15.1" r="1.1" fill="#c0c0c0"/><circle cx="14.5" cy="18.3" r="1.1" fill="#c0c0c0"/><circle cx="17.9" cy="18.3" r="1.1" fill="#c0c0c0"/><circle cx="16.2" cy="16.2" r=".5" fill="#c8c8c8"/></svg></span></span></span></div>
<div class="a td" style="left:711px;top:762px;width:82px;height:43px"><span>9-43</span></div>
<div class="a td" style="left:795px;top:762px;width:132px;height:43px"><span>百家乐</span></div>
<div class="a td" style="left:929px;top:762px;width:82px;height:43px"><span>AS1</span></div>
<div class="a td" style="left:1013px;top:762px;width:150px;height:43px"><span><span class="bl">闲</span>(8) <span class="rd">庄</span>(6)</span></div>
<div class="a td" style="left:1165px;top:762px;width:109px;height:43px"><span><span class="bl">50.00</span></span></div>
<div class="a td" style="left:1276px;top:762px;width:132px;height:43px"><span>50.00</span></div>
<div class="a td" style="left:1410px;top:762px;width:117px;height:43px"><span><span class="rd">-50.00</span></span></div>
<div class="a td" style="left:1529px;top:762px;width:377px;height:43px"><span>517.63/467.63</span></div>
<div class="a tg" style="left:15px;top:805px;width:261px;height:30px"><span>小计</span></div>
<div class="a tg" style="left:278px;top:805px;width:200px;height:30px"><span><span style="font-family:Liberation Serif;font-size:13px">9</span></span></div>
<div class="a tg" style="left:1165px;top:805px;width:109px;height:30px"><span>600.00</span></div>
<div class="a tg" style="left:1276px;top:805px;width:132px;height:30px"><span>600.00</span></div>
<div class="a tg" style="left:1410px;top:805px;width:117px;height:30px"><span><span class="rd">-105.00</span></span></div>
<div class="a tg" style="left:15px;top:837px;width:261px;height:30px"><span>总计</span></div>
<div class="a tg" style="left:278px;top:837px;width:200px;height:30px"><span><span style="font-family:Liberation Serif;font-size:13px">9</span></span></div>
<div class="a tg" style="left:1165px;top:837px;width:109px;height:30px"><span>600.00</span></div>
<div class="a tg" style="left:1276px;top:837px;width:132px;height:30px"><span>600.00</span></div>
<div class="a tg" style="left:1410px;top:837px;width:117px;height:30px"><span><span class="rd">-105.00</span></span></div>
<!--/TABLE-->

<div class="a pg" style="left:1879px;top:889px">1</div>
</body>
</html>
